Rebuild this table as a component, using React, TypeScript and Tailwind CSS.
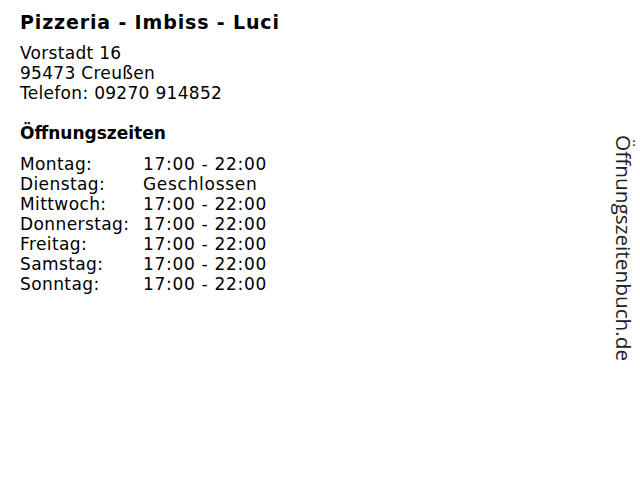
const hours = [
  ["Montag:", "17:00 - 22:00"],
  ["Dienstag:", "Geschlossen"],
  ["Mittwoch:", "17:00 - 22:00"],
  ["Donnerstag:", "17:00 - 22:00"],
  ["Freitag:", "17:00 - 22:00"],
  ["Samstag:", "17:00 - 22:00"],
  ["Sonntag:", "17:00 - 22:00"],
];

export default function App() {
  return (
    <div className="relative w-[640px] h-[480px] bg-white text-black font-['DejaVu_Sans',sans-serif] overflow-hidden">
      <div className="pl-5 pt-[8px]">
        <h1 className="text-[19px] leading-[28px] font-bold tracking-[0.85px]">Pizzeria - Imbiss - Luci</h1>
        <div className="mt-[7px] text-[17px] leading-5 tracking-[0.3px]">
          <div>Vorstadt 16</div>
          <div>95473 Creußen</div>
          <div>Telefon: 09270 914852</div>
        </div>
        <h2 className="mt-[20px] text-[17px] leading-5 font-bold">Öffnungszeiten</h2>
        <div className="mt-[11px] text-[17px] leading-5 tracking-[0.4px]">
          {hours.map(([day, time]) => (
            <div key={day} className="flex">
              <span className="w-[123px]">{day}</span>
              <span className="tracking-[0.7px]">{time}</span>
            </div>
          ))}
        </div>
      </div>
      <div className="absolute right-[4px] top-[135px] [writing-mode:vertical-rl] font-['Open_Sans',sans-serif] text-[20.8px] leading-6 text-[#222]">
        Öffnungszeitenbuch.de
      </div>
    </div>
  );
}
